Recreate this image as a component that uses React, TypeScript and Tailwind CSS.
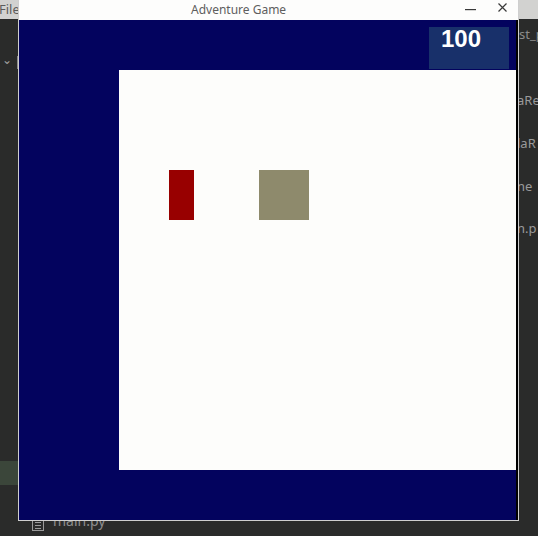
import React from "react";

const font = { fontFamily: '"Noto Sans", "DejaVu Sans", sans-serif' };

function IdeBackdrop() {
  return (
    <div className="absolute inset-0 bg-[#2a2b2a] flex flex-col" style={font}>
      {/* menu bar */}
      <div className="h-[19px] shrink-0 bg-[#d2d2d0] flex items-center text-[13px] text-[#5c5c5c]">
        <span className="-ml-[1px] leading-none">File</span>
      </div>
      <div className="flex flex-1">
        {/* left project tree, mostly under the window */}
        <div className="w-[30px] flex flex-col pt-[37px]">
          <div className="flex items-start gap-[5px] pl-[2px]">
            <span className="text-[12px] text-[#a0a0a0] leading-none -mt-[2px]">⌄</span>
            <div className="w-[10px] h-[13px] border border-[#8a8a8a]" />
          </div>
          <div className="mt-[392px] w-[18px] h-[24px] bg-[#3b463a]" />
        </div>
        <div className="flex-1" />
        {/* right file list, cut by the window */}
        <div className="w-[22px] flex flex-col pt-[9px] text-[13px] leading-none text-[#9a9a9a] whitespace-nowrap overflow-hidden">
          <span className="pl-[3px] text-[#8c8c8c]">st_p</span>
          <span className="mt-[53px] pl-[1px]">aRe</span>
          <span className="mt-[30px] pl-[1px]">laR</span>
          <span className="mt-[30px] pl-[1px]">ne</span>
          <span className="mt-[29px] pl-[1px]">n.p</span>
        </div>
      </div>
      {/* bottom tab */}
      <div className="absolute left-[32px] top-[514px] flex items-start gap-[9px]">
        <div className="mt-[5px] w-[12px] h-[12px] border border-[#9a9a9a] flex flex-col justify-center gap-[2px] px-[2px]">
          <div className="h-px bg-[#9a9a9a]" />
          <div className="h-px bg-[#9a9a9a]" />
          <div className="h-px bg-[#9a9a9a]" />
        </div>
        <span className="text-[14px] leading-none text-[#8e8e8e]">main.py</span>
      </div>
    </div>
  );
}

function TitleBar() {
  return (
    <div className="h-[20px] bg-[#fdfdfc] flex items-center" style={font}>
      <span className="pl-[172px] text-[12px] leading-none text-[#5e5e5e]">Adventure Game</span>
      <div className="ml-auto flex items-center gap-[22px] pr-[11px]">
        <svg width="11" height="9" viewBox="0 0 11 9">
          <rect x="0" y="3" width="11" height="1.2" fill="#3a3a3a" />
        </svg>
        <svg width="9" height="9" viewBox="0 0 9 9" className="-mt-[6px]">
          <path d="M0.5 0.5 L8.5 8.5 M8.5 0.5 L0.5 8.5" stroke="#3a3a3a" strokeWidth="1.2" />
        </svg>
      </div>
    </div>
  );
}

function GameCanvas() {
  return (
    <div className="relative h-[500px] bg-[#03035e] border-r-2 border-black overflow-hidden">
      {/* playfield */}
      <div className="absolute left-[100px] top-[50px] w-[400px] h-[400px] bg-[#fdfdfb]">
        <div className="absolute left-[50px] top-[100px] w-[25px] h-[50px] bg-[#980000]" />
        <div className="absolute left-[140px] top-[100px] w-[50px] h-[50px] bg-[#8e8a6c]" />
      </div>
      {/* score */}
      <div className="absolute left-[410px] top-[7px] w-[80px] h-[42px] bg-[#18306a] pl-[12px]">
        <span
          className="text-[24px] leading-none font-bold text-white"
          style={{ fontFamily: '"Liberation Sans", Arial, sans-serif' }}
        >
          100
        </span>
      </div>
    </div>
  );
}

export default function App() {
  return (
    <div className="relative w-[538px] h-[536px] overflow-hidden">
      <IdeBackdrop />
      <div className="absolute left-[18px] top-0 w-[501px] border-x border-b border-[#cfcfcf] bg-[#fdfdfc] z-10">
        <TitleBar />
        <GameCanvas />
      </div>
    </div>
  );
}
